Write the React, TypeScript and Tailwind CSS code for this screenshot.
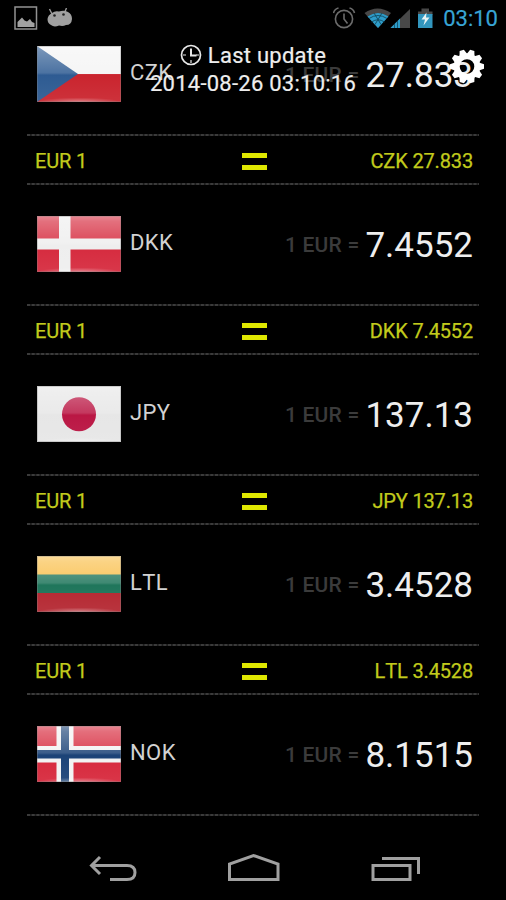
import React from 'react'

const rates = [
  { code: 'CZK', value: '27.833' },
  { code: 'DKK', value: '7.4552' },
  { code: 'JPY', value: '137.13' },
  { code: 'LTL', value: '3.4528' },
  { code: 'NOK', value: '8.1515' },
]

const FlagShapes = ({ code }: { code: string }) => {
  switch (code) {
    case 'CZK':
      return (
        <>
          <rect width="84" height="28" fill="#f4f4f4" />
          <rect y="28" width="84" height="28" fill="#c9202a" />
          <path d="M0 0L41 28L0 56Z" fill="#2a5890" />
        </>
      )
    case 'DKK':
      return (
        <>
          <rect width="84" height="56" fill="#d5263a" />
          <path d="M22 0h11.500v56h-11.500zM0 22.500h84v11h-84z" fill="#eeeeee" />
        </>
      )
    case 'JPY':
      return (
        <>
          <rect width="84" height="56" fill="#e6e6e6" />
          <circle cx="42" cy="28.3" r="17" fill="#b91240" />
        </>
      )
    case 'LTL':
      return (
        <>
          <rect width="84" height="19" fill="#f9bd45" />
          <rect y="18.5" width="84" height="19" fill="#1b7358" />
          <rect y="37" width="84" height="19" fill="#b3232d" />
        </>
      )
    default:
      return (
        <>
          <rect width="84" height="56" fill="#d62438" />
          <path d="M19.500 0h17v56h-17zM0 20h84v16.500h-84z" fill="#f2f2f2" />
          <path d="M24 0h8v56h-8zM0 24h84v8.500h-84z" fill="#173f74" />
        </>
      )
  }
}

const Flag = ({ code }: { code: string }) => (
  <svg className="-mt-px h-14 w-21 shrink-0" viewBox="0 0 84 56">
    <defs>
      <linearGradient id={`gloss-${code}`} x1="0" y1="0" x2="0" y2="1">
        <stop offset="0" stopColor="#fff" stopOpacity="0.45" />
        <stop offset="0.1" stopColor="#fff" stopOpacity="0.34" />
        <stop offset="0.48" stopColor="#fff" stopOpacity="0.16" />
        <stop offset="0.52" stopColor="#fff" stopOpacity="0.02" />
        <stop offset="1" stopColor="#fff" stopOpacity="0.08" />
      </linearGradient>
      <radialGradient id={`shine-${code}`} cx="0.5" cy="1" r="0.5" gradientTransform="matrix(1 0 0 0.16 0 0.84)">
        <stop offset="0" stopColor="#fff" stopOpacity="0.4" />
        <stop offset="1" stopColor="#fff" stopOpacity="0" />
      </radialGradient>
    </defs>
    <FlagShapes code={code} />
    <rect width="84" height="56" fill={`url(#gloss-${code})`} />
    <rect width="84" height="56" fill={`url(#shine-${code})`} />
    <rect x="0.5" y="0.5" width="83" height="55" fill="none" stroke="#888" strokeOpacity="0.35" />
  </svg>
)

const Divider = () => (
  <svg className="block h-0.5 w-full" viewBox="0 0 452 2">
    <path d="M0 1H452" stroke="#1c1c1c" strokeWidth="2" />
    <path d="M0 1H452" stroke="#464646" strokeWidth="1.6" strokeDasharray="3 1.7" />
  </svg>
)

const StatusBar = () => (
  <div className="flex h-9 items-center pr-2 pl-3.5">
    <svg className="h-6 w-6" viewBox="0 0 24 24">
      <rect x="1" y="1" width="21.500" height="22" fill="none" stroke="#929292" strokeWidth="1.5" />
      <path d="M3.500 21v-5L6 13.500L8 11.500L10.500 14.500L13 15.500L16 13L18 16L20.500 17V21Z" fill="#a2a2a2" />
    </svg>
    <svg className="ml-[9px] h-5 w-6.5" viewBox="0 0 26 20">
      <path d="M2.500 1l3 6M19.500 0l-2.500 6" stroke="#9a9a9a" strokeWidth="1.4" />
      <path d="M5 5Q8 2.500 12 3.500Q17 2 21 4Q25 6 25 11Q24.500 17 19 17Q16 18.500 12 17.500Q7 19.500 4 17Q0.500 15.500 0.500 11Q1 7 5 5Z" fill="#a0a0a0" />
      <circle cx="7.500" cy="7.500" r="1.300" fill="#222" />
      <circle cx="16.500" cy="6.500" r="1.300" fill="#222" />
    </svg>
    <svg className="ml-auto h-6 w-25" viewBox="0 0 100 24">
      <g fill="none" stroke="#6c6c6c" strokeWidth="1.600">
        <circle cx="11" cy="13" r="8.600" />
        <path d="M11 7.500V13L14.500 17.500M0.500 7Q1.500 3 5.500 2M16.500 2Q20.500 3 21.500 7" />
      </g>
      <path d="M31.500 7Q44.500 -2 58 7L45 22Z" fill="#484848" />
      <path d="M34.500 10.500Q45 3.500 55.500 10.500L45 22Z" fill="#2d9cc9" />
      <path d="M36 12.500Q45 6.500 54 12.500M38.500 16Q45 11.500 51.500 16M41 7L48 18.500M49 7L42 18.500" fill="none" stroke="#12495f" strokeWidth="0.900" />
      <path d="M57.500 22L77 3V22Z" fill="#484848" />
      <path d="M57.500 22L67 12.500V22Z" fill="#2d9cc9" />
      <path d="M61.500 18V22M64.500 15V22" stroke="#12495f" strokeWidth="0.800" />
      <path d="M85 5.500H88.500V2.500H96V5.500H99.500V9H85Z" fill="#484848" />
      <rect x="85" y="8" width="14.500" height="14" fill="#3296be" />
      <path d="M93.500 6.500L88.500 13.500H92L90.500 19.500L96.500 11.500H93Z" fill="#e8f4f4" />
    </svg>
    <span className="relative top-px ml-2.5 text-[22px] leading-9 text-[#38a5d5] [-webkit-text-stroke:0.2px]">03:10</span>
  </div>
)

const Header = () => (
  <div className="absolute inset-x-0 top-2 text-center text-[22px] leading-7 tracking-[0.25px] text-[#eeeeee] [-webkit-text-stroke:0.2px]">
    <div className="flex items-center justify-center gap-1.5">
      <svg className="-mt-0.5 h-5.5 w-5.5" viewBox="0 0 22 22" fill="none" stroke="#e8e8e8">
        <circle cx="11" cy="11" r="9.500" strokeWidth="1.700" />
        <path d="M11 4.500V11.500H16.500" strokeWidth="2" />
        <path d="M11 16V19M3 11H6M16 11H19" strokeWidth="1.200" />
      </svg>
      <span className="mt-px">Last update</span>
    </div>
    <div>2014-08-26 03:10:16</div>
    <svg className="absolute top-[7px] right-[21px] h-9 w-9" viewBox="-18 -18.500 36 36">
      <circle r="10.300" fill="none" stroke="#fff" strokeWidth="6" />
      <g fill="#fff">
        {[18, 54, 90, 126, 162, 198, 234, 270, 306, 342].map((angle) => (
          <path key={angle} d="M-4 -12L-2.200 -17H2.200L4 -12Z" transform={`rotate(${angle})`} />
        ))}
      </g>
    </svg>
  </div>
)

const RateRow = ({ code, value }: { code: string; value: string }) => (
  <div className="flex h-[119px] items-center pr-1.5 pl-2.5">
    <Flag code={code} />
    <span className="-mt-1 ml-[9px] text-[22px] tracking-[0.4px] text-[#d2d2d2] [font-kerning:none]">{code}</span>
    <span className="mt-0.5 ml-auto text-[21px] font-medium tracking-[0.2px] text-[#3b3b3b]">1 EUR =</span>
    <span className="mt-[3px] ml-1.5 text-[35px] text-[#eeeeee]">{value}</span>
  </div>
)

const Summary = ({ code, value }: { code: string; value: string }) => (
  <div className="grid h-[47px] grid-cols-[1fr_26px_1fr] items-center pr-1.5 pl-2 text-[20px] tracking-[-0.15px] text-[#c2cb1c] [font-kerning:none]">
    <span className="mt-0.5 [-webkit-text-stroke:0.25px]">EUR 1</span>
    <div className="mt-1 ml-px flex flex-col gap-[7px]">
      <div className="h-[5px] bg-[#dfe800]" />
      <div className="h-[5px] bg-[#dfe800]" />
    </div>
    <span className="mt-0.5 text-right [-webkit-text-stroke:0.25px]">{code} {value}</span>
  </div>
)

const NavBar = () => (
  <div className="absolute inset-x-0 bottom-0 h-16">
    <svg className="h-16 w-full" viewBox="0 0 506 64" fill="none" stroke="#a0a0a0" strokeWidth="3">
      <path d="M100 21L91.500 29.500L100 38M92 29.500H127Q135 29.500 135 36.500Q135 43.500 127 43.500H110" />
      <path d="M229.500 43.500V28L253.500 19.500L278 28V43.500Z" />
      <path d="M373 29.500H410V43.500H373ZM382 22.500H418.500V38" />
    </svg>
  </div>
)

const App = () => {
  return (
    <div className="relative h-[900px] w-[506px] overflow-hidden bg-black font-[Roboto,sans-serif]">
      <StatusBar />
      <div className="-mt-[21px] px-[27px]">
        {rates.map((rate, i) => (
          <div key={rate.code}>
            <RateRow {...rate} />
            <Divider />
            {i < rates.length - 1 && (
              <>
                <Summary {...rate} />
                <Divider />
              </>
            )}
          </div>
        ))}
      </div>
      <div className="absolute inset-x-0 top-[33px]">
        <Header />
      </div>
      <NavBar />
    </div>
  )
}

export default App
